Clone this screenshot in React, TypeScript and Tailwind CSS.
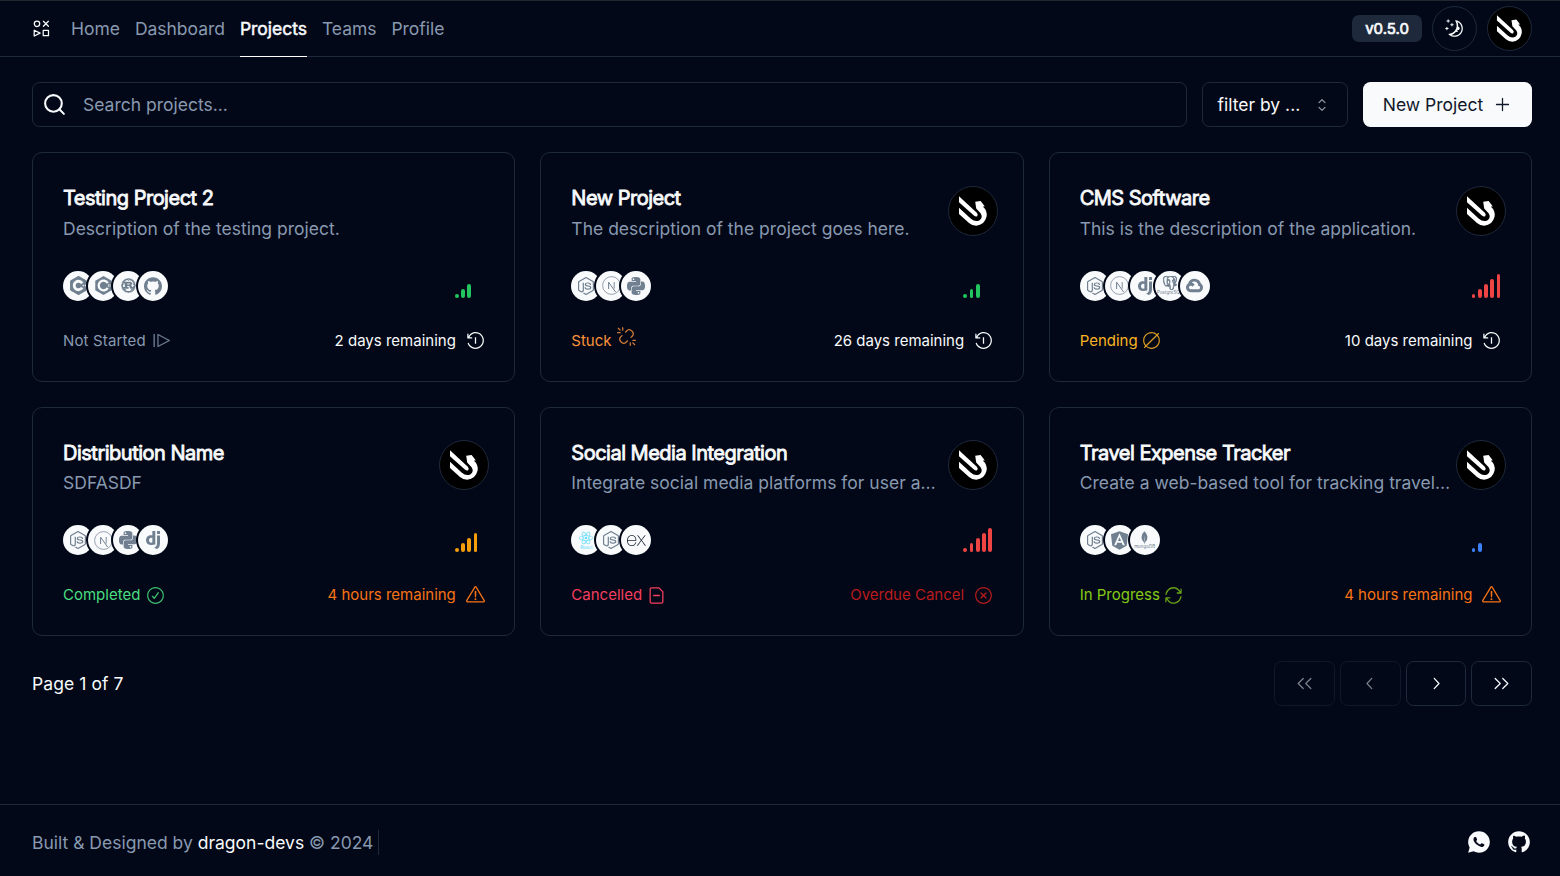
import type { ReactNode } from "react";
import type { IconType } from "react-icons";
import { Search } from "lucide-react";
import { SiCplusplus, SiDjango, SiExpress, SiGithub, SiGooglecloud, SiMongodb, SiNodedotjs, SiPostgresql, SiPython, SiReact } from "react-icons/si";
import { FaAngular, FaRust } from "react-icons/fa";
import { RiGithubFill, RiWhatsappFill } from "react-icons/ri";
import {
  RxCaretSort,
  RxCheckCircled,
  RxChevronLeft,
  RxChevronRight,
  RxCountdownTimer,
  RxCrossCircled,
  RxDoubleArrowLeft,
  RxDoubleArrowRight,
  RxExclamationTriangle,
  RxFileMinus,
  RxLinkBreak2,
  RxMoon,
  RxPlus,
  RxResume,
  RxUpdate,
  RxValueNone,
} from "react-icons/rx";

function AppLogo() {
  return (
    <svg width="20" height="20" viewBox="0 0 20 20" fill="none" stroke="currentColor" strokeWidth="1.25" strokeLinejoin="round" strokeLinecap="round">
      <circle cx="5" cy="4.8" r="2.7" />
      <path d="M11.4 2.3 16.4 7.3M16.4 2.3 11.4 7.3" />
      <path d="M2.2 11.2v5.8l5.9-2.9z" />
      <path d="M11.2 11.4h5.3v5.3h-5.3z" />
    </svg>
  );
}

function DragonAvatar({ className }: { className: string }) {
  return (
    <div className={`shrink-0 overflow-hidden rounded-full border border-[#1e293b] bg-black ${className}`}>
      <svg viewBox="1 1 48 48" className="size-full" fill="#fff">
        <path d="M11 10.2 28.8 26.8Q30.4 28.6 29.3 29.9 28 31.2 26.2 29.8L11 16.2Z" />
        <path d="M11 21.8 22.6 32.6Q27.4 36.6 31.6 34.2 35.3 31.2 32.6 27.2L28.2 22.4 27.2 15.7 32.6 15 35 18 36.8 20.4 34.8 20.5Q39.6 24.8 38.6 30.6 36.6 39.2 28.2 39.7 24 39.5 21 37L11 28Z" />
      </svg>
    </div>
  );
}

function NextMark() {
  return (
    <svg width="19" height="19" viewBox="0 0 19 19" fill="none" stroke="currentColor">
      <circle cx="9.5" cy="9.5" r="8.9" strokeWidth="0.7" />
      <path d="M6.6 13V6.2L13.6 16" strokeWidth="1" />
      <path d="M12.2 6v6.6" strokeWidth="0.9" />
    </svg>
  );
}

function CHexMark() {
  return (
    <svg width="19" height="19" viewBox="0 0 24 24">
      <path d="M12 0 22.4 6v12L12 24 1.6 18V6z" fill="currentColor" />
      <path d="M17.3 8.9a6.1 6.1 0 1 0 0 6.2" fill="none" stroke="#f8fafc" strokeWidth="3" />
      <circle cx="12" cy="12" r="4" fill="currentColor" />
      <path d="M18.2 10v4M20.2 10v4" stroke="#f8fafc" strokeWidth=".8" />
    </svg>
  );
}

function Wordmark({ icon: Icon, label, size, heavy }: { icon: IconType; label: string; size: number; heavy?: boolean }) {
  return (
    <span className="flex flex-col items-center">
      <Icon size={size} strokeWidth={heavy ? 1.4 : 0} />
      <span className="text-[4.5px] leading-[5px]">{label}</span>
    </span>
  );
}

const tech: Record<string, ReactNode> = {
  cpp: <SiCplusplus size={19} />,
  csharp: <CHexMark />,
  rust: <FaRust size={15} />,
  github: <SiGithub size={18} />,
  node: <SiNodedotjs size={18} />,
  next: <NextMark />,
  python: <SiPython size={18} />,
  django: <SiDjango size={18} />,
  postgres: <Wordmark icon={SiPostgresql} label="PostgreSQL" size={14} heavy />,
  gcloud: <SiGooglecloud size={17} />,
  react: (
    <span className="text-[#61dafb]">
      <Wordmark icon={SiReact} label="React" size={14} />
    </span>
  ),
  express: (
    <span className="text-[#1f2937]">
      <SiExpress size={19} />
    </span>
  ),
  angular: <FaAngular size={21} />,
  mongo: <Wordmark icon={SiMongodb} label="mongoDB" size={13} />,
};

type Project = {
  title: string;
  description: string;
  avatar: boolean;
  stack: string[];
  priority: number;
  priorityColor: string;
  status: string;
  statusColor: string;
  statusIcon: IconType;
  statusIconClass: string;
  due: string;
  dueColor: string;
  dueIcon: IconType;
};

const projects: Project[] = [
  {
    title: "Testing Project 2",
    description: "Description of the testing project.",
    avatar: false,
    stack: ["cpp", "csharp", "rust", "github"],
    priority: 3,
    priorityColor: "bg-[#22c55e]",
    status: "Not Started",
    statusColor: "text-[#8899b0] tracking-[0.16px]",
    statusIcon: RxResume,
    statusIconClass: "opacity-80",
    due: "2 days remaining",
    dueColor: "text-[#f8fafc]",
    dueIcon: RxCountdownTimer,
  },
  {
    title: "New Project",
    description: "The description of the project goes here.",
    avatar: true,
    stack: ["node", "next", "python"],
    priority: 3,
    priorityColor: "bg-[#22c55e]",
    status: "Stuck",
    statusColor: "text-[#fb923c]",
    statusIcon: RxLinkBreak2,
    statusIconClass: "mb-[8px] opacity-85",
    due: "26 days remaining",
    dueColor: "text-[#f8fafc]",
    dueIcon: RxCountdownTimer,
  },
  {
    title: "CMS Software",
    description: "This is the description of the application.",
    avatar: true,
    stack: ["node", "next", "django", "postgres", "gcloud"],
    priority: 5,
    priorityColor: "bg-[#ef4444]",
    status: "Pending",
    statusColor: "text-[#fbb424]",
    statusIcon: RxValueNone,
    statusIconClass: "-ml-px opacity-85",
    due: "10 days remaining",
    dueColor: "text-[#f8fafc]",
    dueIcon: RxCountdownTimer,
  },
  {
    title: "Distribution Name",
    description: "SDFASDF",
    avatar: true,
    stack: ["node", "next", "python", "django"],
    priority: 4,
    priorityColor: "bg-[#f59e0b]",
    status: "Completed",
    statusColor: "text-[#4ade80]",
    statusIcon: RxCheckCircled,
    statusIconClass: "ml-px opacity-85",
    due: "4 hours remaining",
    dueColor: "text-[#f97316]",
    dueIcon: RxExclamationTriangle,
  },
  {
    title: "Social Media Integration",
    description: "Integrate social media platforms for user a…",
    avatar: true,
    stack: ["react", "node", "express"],
    priority: 5,
    priorityColor: "bg-[#ef4444]",
    status: "Cancelled",
    statusColor: "text-[#f43f5e]",
    statusIcon: RxFileMinus,
    statusIconClass: "",
    due: "Overdue Cancel",
    dueColor: "text-[#b91c1c]",
    dueIcon: RxCrossCircled,
  },
  {
    title: "Travel Expense Tracker",
    description: "Create a web-based tool for tracking travel…",
    avatar: true,
    stack: ["node", "angular", "mongo"],
    priority: 2,
    priorityColor: "bg-[#3b82f6]",
    status: "In Progress",
    statusColor: "text-[#84cc16]",
    statusIcon: RxUpdate,
    statusIconClass: "-ml-px rotate-90 opacity-80",
    due: "4 hours remaining",
    dueColor: "text-[#f97316]",
    dueIcon: RxExclamationTriangle,
  },
];

const barHeights = ["h-[3.75px]", "h-[8.75px]", "h-[13.75px]", "h-[18.75px]", "h-[23.75px]"];

function ProjectCard({ project }: { project: Project }) {
  const StatusIcon = project.statusIcon;
  const DueIcon = project.dueIcon;
  return (
    <article className="flex h-[229.4px] min-w-0 flex-col rounded-[10px] border border-[#1e293b] px-[30px]">
      <div className="mt-[32.65px] flex h-[50px] justify-between">
        <div className="w-[372px] shrink-0 whitespace-nowrap">
          <h2 className="mt-[0.3px] text-[20px] leading-[25px] tracking-tight [-webkit-text-stroke:0.8px_currentColor]">{project.title}</h2>
          <p className="mt-[4.7px] text-[17.5px] leading-[25px] tracking-[0.01px] text-[#8899b0]">{project.description}</p>
        </div>
        {project.avatar && <DragonAvatar className="-mr-[5px] size-[50px]" />}
      </div>
      <div className="mt-[35px] flex h-[30px] items-end justify-between">
        <div className="flex -space-x-[5px]">
          {project.stack.map((name) => (
            <span key={name} className="flex size-[30px] items-center justify-center overflow-hidden rounded-full bg-[#f8fafc] text-[#708090] ring-2 ring-[#020817]">
              {tech[name]}
            </span>
          ))}
        </div>
        <div className="-mr-[0.6px] mb-[3.25px] flex w-[30px] items-end gap-[2.5px]">
          {barHeights.slice(0, project.priority).map((height) => (
            <span key={height} className={`w-[3.75px] rounded-full ${height} ${project.priorityColor}`} />
          ))}
        </div>
      </div>
      <div className="mt-[30px] flex h-[20px] items-center justify-between text-[15px] leading-[20px]">
        <span className={`flex items-center gap-[5px] ${project.statusColor}`}>
          {project.status}
          <StatusIcon size={19} className={project.statusIconClass} />
        </span>
        <span className={`-mr-[0.2px] flex items-center gap-[9.7px] ${project.dueColor}`}>
          {project.due}
          <DueIcon size={19} />
        </span>
      </div>
    </article>
  );
}

const links = ["Home", "Dashboard", "Projects", "Teams", "Profile"];

const pagerButtons: { icon: IconType; disabled: boolean }[] = [
  { icon: RxDoubleArrowLeft, disabled: true },
  { icon: RxChevronLeft, disabled: true },
  { icon: RxChevronRight, disabled: false },
  { icon: RxDoubleArrowRight, disabled: false },
];

export default function App() {
  return (
    <div className="flex h-[876px] w-full flex-col overflow-hidden bg-[#020817] font-[Inter,sans-serif] text-[17.5px] leading-[25px] text-[#f8fafc]">
      <header className="flex h-[57px] shrink-0 items-stretch justify-between border-t border-b border-t-[#22272f] border-b-[#1e293b] pr-7 pl-8">
        <nav className="flex items-stretch gap-[15px] tracking-[-0.03px]">
          <span className="mr-1 flex items-center">
            <AppLogo />
          </span>
          {links.map((link) => (
            <a
              key={link}
              className={
                link === "Projects"
                  ? "-mb-px flex items-center border-b border-white [-webkit-text-stroke:0.5px_currentColor]"
                  : "-mb-px flex items-center border-b border-transparent text-[#8899b0]"
              }
            >
              {link}
            </a>
          ))}
        </nav>
        <div className="flex items-center gap-[10px]">
          <span className="flex h-[27px] w-[70px] items-center justify-center rounded-[7px] bg-[#1e293b] text-[15px] [-webkit-text-stroke:0.7px_currentColor]">v0.5.0</span>
          <button className="flex size-[45px] items-center justify-center rounded-full border border-[#1e293b]">
            <RxMoon size={19} />
          </button>
          <DragonAvatar className="size-[45px]" />
        </div>
      </header>

      <main className="flex flex-1 flex-col pt-[25px] pr-7 pl-8">
        <div className="flex h-[45px] gap-[15px]">
          <label className="flex flex-1 items-center gap-4 rounded-[7.5px] border border-[#1e293b] pl-[9px]">
            <Search size={25} strokeWidth={2} />
            <input className="min-w-0 flex-1 bg-transparent outline-none placeholder:text-[#8899b0]" placeholder="Search projects..." />
          </label>
          <button className="flex w-[146px] items-center justify-between rounded-[7.5px] border border-[#1e293b] pr-[15px] pl-[14.5px]">
            filter by ...
            <RxCaretSort size={20} className="opacity-60" />
          </button>
          <button className="flex w-[169px] items-center justify-center gap-[10px] rounded-[7.5px] bg-[#f8fafc] text-[#0f172a]">
            New Project
            <RxPlus size={19} />
          </button>
        </div>

        <section className="mt-[25.2px] grid grid-cols-3 gap-[25px]">
          {projects.map((project) => (
            <ProjectCard key={project.title} project={project} />
          ))}
        </section>

        <div className="mt-[25px] flex items-center justify-between">
          <span className="tracking-[0.08px]">Page 1 of 7</span>
          <div className="flex gap-[5px]">
            {pagerButtons.map(({ icon: Icon, disabled }, index) => (
              <button
                key={index}
                disabled={disabled}
                className={`flex h-[45px] w-[60.75px] items-center justify-center rounded-[7.5px] border border-[#1e293b] ${disabled ? "opacity-50" : ""}`}
              >
                <Icon size={19} />
              </button>
            ))}
          </div>
        </div>
      </main>

      <footer className="flex h-[72px] shrink-0 items-center justify-between border-t border-[#1e293b] pt-1 pr-[28px] pl-8">
        <div className="flex items-center gap-[5px] text-[#8899b0]">
          <span>
            Built &amp; Designed by <span className="text-[#f8fafc]">dragon-devs</span> © 2024
          </span>
          <span className="h-[25px] w-px bg-[#1e293b]" />
        </div>
        <div className="mb-px flex gap-[14px]">
          <RiWhatsappFill size={26} />
          <RiGithubFill size={26} />
        </div>
      </footer>
    </div>
  );
}
